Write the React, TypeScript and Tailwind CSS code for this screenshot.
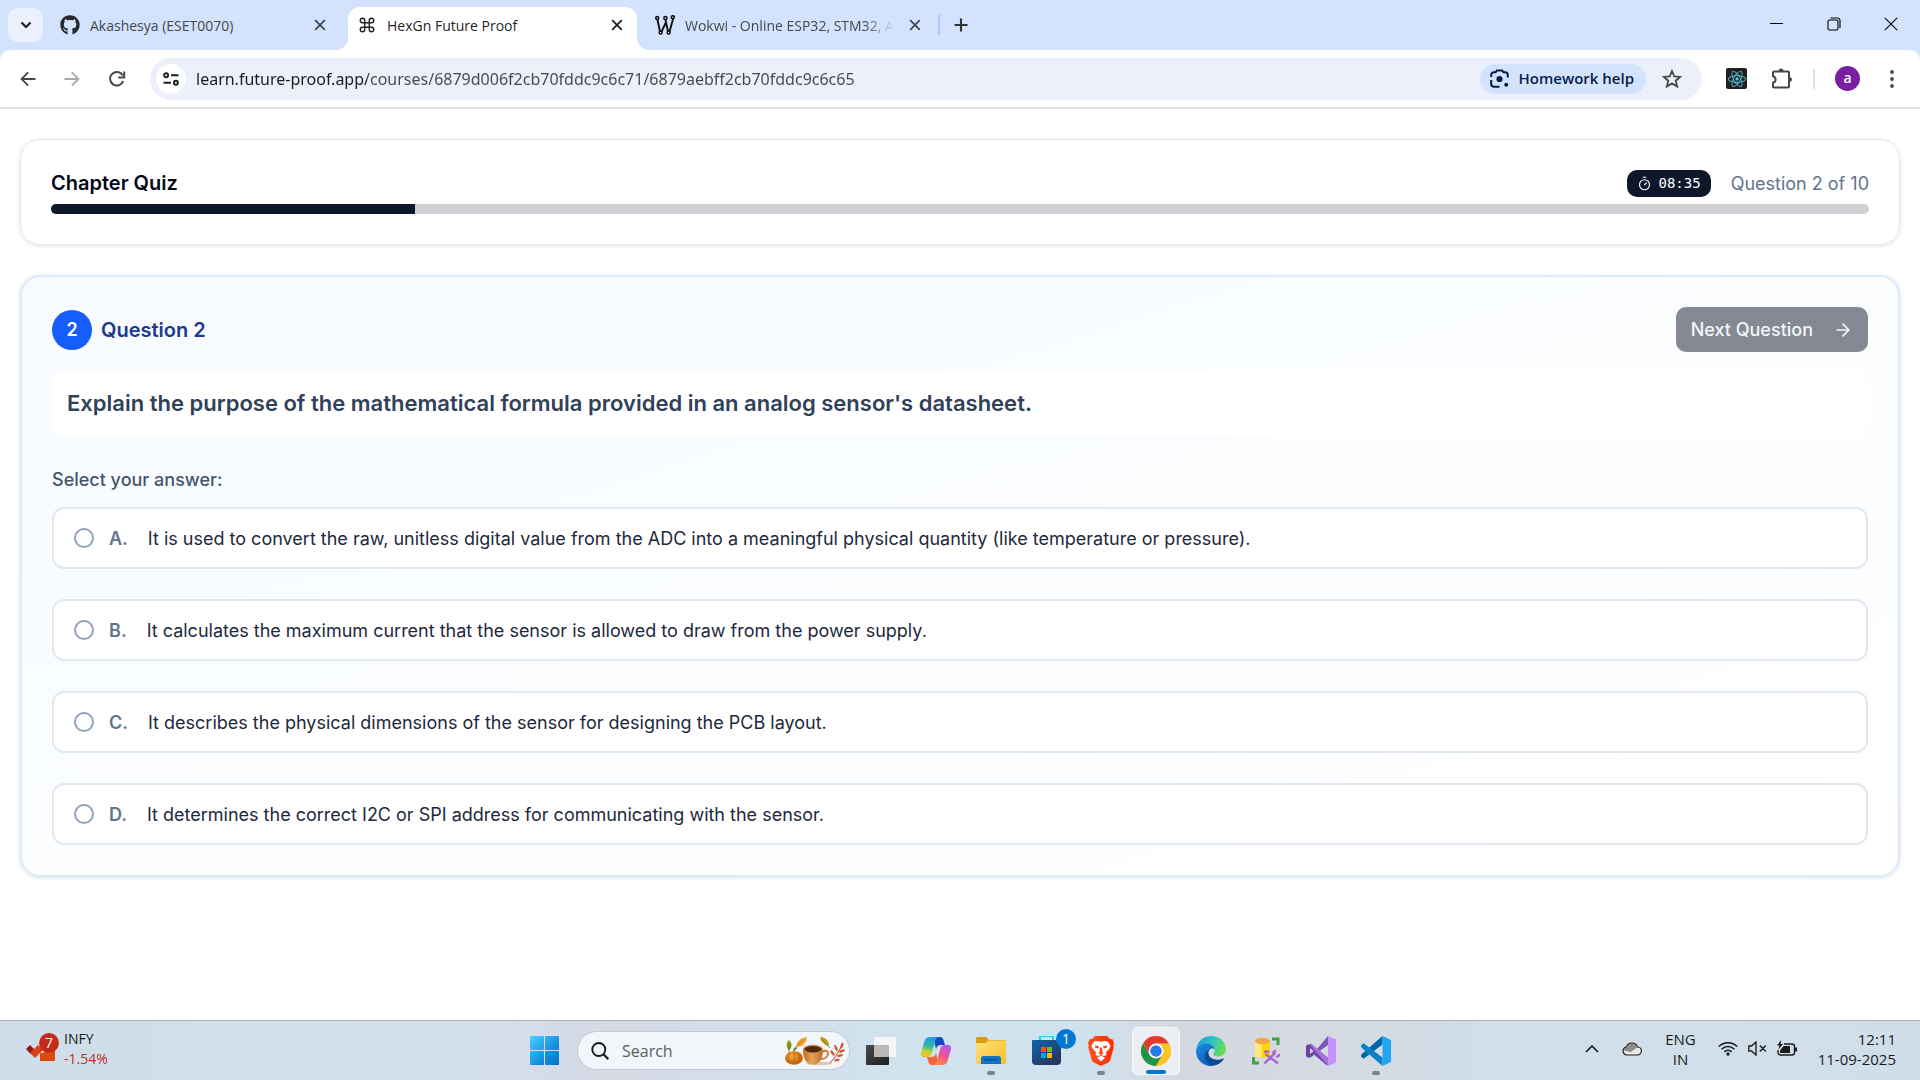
import type { ReactNode } from "react";
import { useState } from "react";
import { ArrowRight, Command, Timer } from "lucide-react";
import { FaGithub } from "react-icons/fa";
import { SiReact } from "react-icons/si";

const options = [
  { id: "A", text: "It is used to convert the raw, unitless digital value from the ADC into a meaningful physical quantity (like temperature or pressure)." },
  { id: "B", text: "It calculates the maximum current that the sensor is allowed to draw from the power supply." },
  { id: "C", text: "It describes the physical dimensions of the sensor for designing the PCB layout." },
  { id: "D", text: "It determines the correct I2C or SPI address for communicating with the sensor." },
];

function CloseIcon() {
  return (
    <svg viewBox="0 0 12 12" className="size-3" fill="none" stroke="currentColor" strokeWidth="1.8" aria-hidden="true">
      <path d="M1.2 1.2 10.8 10.8M10.8 1.2 1.2 10.8" />
    </svg>
  );
}

function WokwiIcon() {
  return (
    <svg viewBox="0 0 20 20" className="size-5 shrink-0" fill="none" stroke="#111" strokeWidth="1.9" strokeLinecap="round" strokeLinejoin="round" aria-hidden="true">
      <path d="M2.4 4.5 5 16.5M6.4 17 10.6 8M10.6 5.5 13 16.3M14.4 17 18 4.2" />
      <g fill="#d3e3fd" strokeWidth="1.5">
        <circle cx="2.2" cy="3" r="1.5" />
        <circle cx="10.4" cy="3" r="1.6" />
        <circle cx="17.8" cy="2.2" r="1.5" />
        <circle cx="5.6" cy="17.6" r="1.5" />
        <circle cx="13.6" cy="17.6" r="1.5" />
      </g>
    </svg>
  );
}

function TabStrip() {
  return (
    <header className="flex h-[50px] items-stretch bg-[#d3e3fd] pl-2 text-[14px] text-[#44474b]">
      <button aria-label="Search tabs" className="mt-2 flex h-[34px] w-[35px] items-center justify-center rounded-[10px] bg-[#ebf1fd] text-[#1f1f1f]">
        <svg viewBox="0 0 12 8" className="h-2 w-3" fill="none" stroke="currentColor" strokeWidth="2.2"><path d="m1.5 1.5 4.5 4.5 4.5-4.5" /></svg>
      </button>
      <nav className="flex items-stretch" aria-label="Tabs">
        <div className="flex w-[305px] items-center pb-2 pl-[17px] pr-[22px] pt-2">
          <FaGithub className="size-5 shrink-0 text-[#24292f]" />
          <span className="ml-2.5 flex-1 truncate">Akashesya (ESET0070)</span>
          <button aria-label="Close Akashesya"><CloseIcon /></button>
        </div>
        <div className="relative mt-[7px] flex w-[289px] items-center rounded-t-xl bg-white pb-[7px] pl-2.5 pr-3.5 text-[#1f1f1f]">
          <span className="absolute -left-3 bottom-0 size-3 bg-[radial-gradient(circle_at_0_0,transparent_12px,white_12px)]" />
          <span className="absolute -right-3 bottom-0 size-3 bg-[radial-gradient(circle_at_100%_0,transparent_12px,white_12px)]" />
          <Command className="size-[18px] shrink-0" strokeWidth={1.8} />
          <span className="ml-[11px] flex-1 truncate">HexGn Future Proof</span>
          <button aria-label="Close HexGn Future Proof"><CloseIcon /></button>
        </div>
        <div className="flex w-[301px] items-center pb-2 pl-[18px] pr-[17px] pt-2">
          <WokwiIcon />
          <span className="ml-2.5 whitespace-nowrap [mask-image:linear-gradient(to_right,black_86%,transparent)]">
            Wokwi - Online ESP32, STM32, A
          </span>
          <button aria-label="Close Wokwi" className="ml-auto"><CloseIcon /></button>
        </div>
      </nav>
      <span className="mt-[15px] h-5 w-0.5 bg-[#a8c7fa]" />
      <button aria-label="New tab" className="mb-2 ml-[14px] mt-2 text-[#333]">
        <svg viewBox="0 0 14 14" className="size-3.5" stroke="currentColor" strokeWidth="2.1"><path d="M7 .5v13M.5 7h13" /></svg>
      </button>
      <div className="mb-[3px] ml-auto flex items-center pr-px text-black">
        <button aria-label="Minimize" className="flex h-full w-[57px] items-center justify-center"><span className="h-px w-[13px] bg-black" /></button>
        <button aria-label="Restore" className="flex h-full w-[57px] items-center justify-center">
          <svg viewBox="0 0 14 14" className="size-3.5" fill="none" stroke="currentColor" strokeWidth="1.1"><rect x="1" y="3" width="10" height="10" rx="1.5" /><path d="M3.5 1h7a2.5 2.5 0 0 1 2.5 2.5V11" /></svg>
        </button>
        <button aria-label="Close window" className="flex h-full w-[57px] items-center justify-center">
          <svg viewBox="0 0 14 14" className="size-3.5" stroke="currentColor" strokeWidth="1.1"><path d="m.8.8 12.4 12.4M13.2.8.8 13.2" /></svg>
        </button>
      </div>
    </header>
  );
}

function Toolbar() {
  return (
    <div className="bg-[#d3e3fd]">
      <div className="flex h-[59px] items-center rounded-t-[10px] border-b-2 border-[#dfe1e3] bg-white pl-5 text-[#474747]">
        <button aria-label="Back">
          <svg viewBox="0 0 16 16" className="size-4" fill="none" stroke="currentColor" strokeWidth="1.8"><path d="M15.5 8H1.5M8.2 1.3 1.5 8l6.7 6.7" /></svg>
        </button>
        <button aria-label="Forward" className="ml-7 text-[#a9a9a9]">
          <svg viewBox="0 0 16 16" className="size-4" fill="none" stroke="currentColor" strokeWidth="1.8"><path d="M.5 8h14M7.8 1.3 14.5 8l-6.7 6.7" /></svg>
        </button>
        <button aria-label="Reload" className="ml-7">
          <svg viewBox="0 0 18 18" className="size-[18px]" fill="none" stroke="currentColor" strokeWidth="2"><path d="M15.2 11.2A6.8 6.8 0 1 1 14.8 5.4" /><path d="M16.2 1.5v6h-6" /></svg>
        </button>
        <div className="ml-6 flex h-[42px] flex-1 items-center rounded-full bg-[#ebf0fa] pl-1.5 pr-5">
          <button aria-label="View site information" className="flex size-[30px] items-center justify-center rounded-full bg-white text-[#1f1f1f]">
            <svg viewBox="0 0 16 14" className="h-3.5 w-4" fill="none" stroke="currentColor" strokeWidth="1.9"><circle cx="3.1" cy="3.2" r="2" /><path d="M8 3.2h7.5M.5 10.8H8" /><circle cx="12.9" cy="10.8" r="2" /></svg>
          </button>
          <input
            aria-label="Address"
            readOnly
            value="learn.future-proof.app/courses/6879d006f2cb70fddc9c6c71/6879aebff2cb70fddc9c6c65"
            className="ml-2.5 h-[30px] min-w-0 flex-1 bg-[linear-gradient(90deg,#1b1b1b_171px,#474747_171px)] bg-clip-text font-['Noto_Sans',sans-serif] text-[16px] text-transparent outline-none"
          />
          <button className="flex h-[30px] items-center gap-2.5 rounded-full bg-[#d3e3fd] pl-2.5 pr-3 text-[15px] font-semibold text-[#041e49]">
            <svg viewBox="0 0 19 19" className="size-[19px]" fill="none" stroke="currentColor" strokeWidth="2">
              <path d="M1.2 8V6a2.8 2.8 0 0 1 2.8-2.8h1.6L6.8 1.4h5.4l1.2 1.8H15A2.8 2.8 0 0 1 17.8 6v2.5M1.2 11v4A2.8 2.8 0 0 0 4 17.8h5.5" />
              <circle cx="9.5" cy="10" r="3.1" fill="currentColor" stroke="none" /><circle cx="16.2" cy="15.8" r="2" fill="currentColor" stroke="none" />
            </svg>
            Homework help
          </button>
          <button aria-label="Bookmark this tab" className="ml-4">
            <svg viewBox="0 0 20 19" className="h-[19px] w-5" fill="none" stroke="currentColor" strokeWidth="1.8"><path d="m10 2 2.3 5.4 5.9.5-4.5 3.8 1.4 5.8-5.1-3.1-5.1 3.1 1.4-5.8L1.8 7.9l5.9-.5z" /></svg>
          </button>
        </div>
        <button aria-label="React Developer Tools" className="ml-6 flex size-[21px] items-center justify-center rounded-xs bg-[#202020] text-[#58c4dc]"><SiReact className="size-[18px]" /></button>
        <button aria-label="Extensions" className="ml-6">
          <svg viewBox="0 0 22 21" className="h-[21px] w-[22px]" fill="none" stroke="currentColor" strokeWidth="2">
            <path d="M3 3.5h14a1 1 0 0 1 1 1v14a1 1 0 0 1-1 1H3a1 1 0 0 1-1-1v-3.7a3.4 3.4 0 0 0 0-6.6V4.5a1 1 0 0 1 1-1z" />
            <path d="M7.500 3a2.500 2.500 0 0 1 5 0zM18.500 9a2.500 2.500 0 0 1 0 5z" fill="currentColor" stroke="none" />
          </svg>
        </button>
        <span className="ml-5 h-5 w-0.5 bg-[#d3e3fd]" />
        <button aria-label="Profile" className="ml-5 flex size-[25px] items-center justify-center rounded-full bg-[#7b1fa2] pb-0.5 text-[14px] font-semibold text-white">a</button>
        <button aria-label="Menu" className="ml-[25px] mr-[21px] w-[14px]">
          <svg viewBox="0 0 14 18" className="h-[18px] w-3.5" fill="currentColor"><circle cx="7" cy="2" r="1.9" /><circle cx="7" cy="9" r="1.9" /><circle cx="7" cy="16" r="1.9" /></svg>
        </button>
      </div>
    </div>
  );
}

function Quiz() {
  const [picked, setPicked] = useState("");
  return (
    <main className="flex flex-1 flex-col gap-[30px] px-5 pt-[30px] font-[Inter,sans-serif]">
      <section className="rounded-[20px] border border-slate-200 px-[30px] pb-[30px] pt-[28px] shadow-[0_1px_4px_rgba(0,0,0,0.12)]">
        <div className="flex items-center justify-between">
          <h1 className="text-[20px] font-semibold leading-[30px] text-[#020618]">Chapter Quiz</h1>
          <div className="flex items-center gap-5">
            <span className="flex h-[27px] items-center gap-1.5 rounded-[10px] bg-[#0f172b] px-2.5 font-['DejaVu_Sans_Mono',monospace] text-[14px] text-white">
              <Timer className="size-[15px]" strokeWidth={1.8} />
              08:35
            </span>
            <span className="text-[18px] leading-[25px] text-slate-500">Question 2 of 10</span>
          </div>
        </div>
        <div role="progressbar" aria-valuenow={20} aria-label="Quiz progress" className="mt-1.5 h-2.5 overflow-hidden rounded-full bg-[#cfd0d4]">
          <div className="h-full w-1/5 bg-[#0f172b]" />
        </div>
      </section>

      <section className="rounded-[20px] border-2 border-blue-100 bg-linear-to-br from-[#f7fbff] to-white p-[30px] shadow-[0_1px_4px_rgba(0,0,0,0.12)]">
        <div className="flex items-center justify-between">
          <div className="flex items-center gap-[9px]">
            <span className="flex size-10 items-center justify-center rounded-full bg-[#155dfc] text-[18px] font-semibold text-white">2</span>
            <h2 className="text-[20px] font-semibold text-blue-900">Question 2</h2>
          </div>
          <button className="flex h-[45px] items-center gap-5 rounded-[10px] bg-[#868994] px-[15px] text-[18px] font-medium text-[#f4f6f9]">
            Next Question
            <ArrowRight className="size-5" strokeWidth={2} />
          </button>
        </div>
        <h3 className="mt-[18px] rounded-[12px] bg-white px-[15px] py-[17px] text-[22px] font-semibold leading-[33px] text-slate-700">
          Explain the purpose of the mathematical formula provided in an analog sensor's datasheet.
        </h3>
        <fieldset className="mt-[30px]">
          <legend className="text-[18px] font-medium leading-[25px] text-slate-600">Select your answer:</legend>
          <div className="mt-[15px] flex flex-col gap-[30px]">
            {options.map((o) => (
              <label key={o.id} className="flex min-h-[62px] items-center rounded-[12px] border-2 border-slate-200 bg-white px-5 text-[18px] leading-[25px]">
                <input
                  type="radio"
                  name="answer"
                  value={o.id}
                  checked={picked === o.id}
                  onChange={() => setPicked(o.id)}
                  className="size-5 appearance-none rounded-full border-2 border-[#90a1b9] checked:border-[6px] checked:border-[#155dfc]"
                />
                <span className="ml-[15px] font-semibold text-slate-500">{o.id}.</span>
                <span className="ml-5 text-slate-800">{o.text}</span>
              </label>
            ))}
          </div>
        </fieldset>
      </section>
    </main>
  );
}

function TaskButton({ label, children, active, running }: { label: string; children: ReactNode; active?: boolean; running?: boolean }) {
  return (
    <button
      aria-label={label}
      className={active ? "relative flex size-12 items-center justify-center rounded-md border border-white/60 bg-white/55" : "relative flex size-12 items-center justify-center rounded-md"}
    >
      {children}
      {active && <span className="absolute bottom-0 h-1 w-5 rounded-full bg-[#0078d4]" />}
      {running && <span className="absolute bottom-0 h-1 w-2 rounded-full bg-[#7c8083]" />}
    </button>
  );
}

function StartIcon() {
  return (
    <svg viewBox="0 0 29 29" className="size-[29px]">
      <defs><linearGradient id="start" x1="0" y1="0" x2="29" y2="29" gradientUnits="userSpaceOnUse"><stop stopColor="#4bd0ff" /><stop offset="0.6" stopColor="#1590e0" /><stop offset="1" stopColor="#0072cf" /></linearGradient></defs>
      <g fill="url(#start)"><rect width="14" height="14" rx="1" /><rect x="15" width="14" height="14" rx="1" /><rect y="15" width="14" height="14" rx="1" /><rect x="15" y="15" width="14" height="14" rx="1" /></g>
    </svg>
  );
}

function AutumnArt() {
  return (
    <svg viewBox="0 0 60 30" className="h-[30px] w-[60px]">
      <defs>
        <linearGradient id="cup" x1="0" x2="1"><stop stopColor="#b8651d" /><stop offset="0.45" stopColor="#e9a25a" /><stop offset="1" stopColor="#b76a26" /></linearGradient>
        <radialGradient id="pumpkin" cx="0.4" cy="0.35"><stop stopColor="#f7b13c" /><stop offset="1" stopColor="#c9660c" /></radialGradient>
      </defs>
      <ellipse cx="34" cy="27.5" rx="13" ry="1.8" fill="#dfc7ad" />
      <path d="M4 4c-4 4-2 8 0 11 3-4 4-7 0-11z" fill="#8d9a20" /><path d="M4 7v10" stroke="#6c7412" strokeWidth="0.7" />
      <path d="M11 11c1-6 4-9 11-10-1 6-4 10-11 10z" fill="#efa12c" /><path d="m10 12 9-9" stroke="#b86b14" strokeWidth="0.7" />
      <path d="M35 1c6 0 9 4 9 9-5-1-8-4-9-9z" fill="#b7a11c" /><path d="m37 3 8 9" stroke="#7d6d12" strokeWidth="0.7" />
      <path d="M45 27c4-4 9-11 12-18" stroke="#b8431a" strokeWidth="1" fill="none" strokeLinecap="round" />
      <g fill="#d9572a">
        <ellipse cx="57" cy="9.500" rx="1.300" ry="3" transform="rotate(20 57 9.500)" />
        <ellipse cx="51" cy="12" rx="1.300" ry="3.200" transform="rotate(-25 51 12)" />
        <ellipse cx="57" cy="15" rx="1.300" ry="3" transform="rotate(65 57 15)" />
        <ellipse cx="47.500" cy="17" rx="1.300" ry="3.200" transform="rotate(-35 47.500 17)" />
        <ellipse cx="55" cy="19.500" rx="1.300" ry="3" transform="rotate(75 55 19.500)" />
        <ellipse cx="52" cy="24" rx="1.200" ry="2.800" transform="rotate(80 52 24)" />
      </g>
      <path d="M9 15c0-2 1-3 3-3" stroke="#5f7a1d" strokeWidth="1.6" fill="none" />
      <ellipse cx="9" cy="22" rx="9" ry="6.8" fill="url(#pumpkin)" />
      <path d="M9 15.500v13M5.500 16c-3 4-3 8 0 12M12.500 16c3 4 3 8 0 12" stroke="#b75c0c" strokeWidth="0.7" fill="none" />
      <path d="M37 16c5-3 7 0 5.500 3.500S38 23 36 23" stroke="#c47a35" strokeWidth="1.8" fill="none" />
      <path d="M18 13c0 9 3 15.500 10 15.500S38 22 38 13z" fill="url(#cup)" />
      <ellipse cx="28" cy="13" rx="10" ry="4.3" fill="#d98e45" /><ellipse cx="28" cy="13.3" rx="8.5" ry="3.2" fill="#4e2a10" />
    </svg>
  );
}

function TaskViewIcon() {
  return (
    <svg viewBox="0 0 30 30" className="size-[30px]">
      <defs><linearGradient id="tv" x2="1" y2="1"><stop stopColor="#4b4b4b" /><stop offset="1" stopColor="#1d1d1d" /></linearGradient></defs>
      <rect y="9" width="23" height="20" rx="1" fill="url(#tv)" /><rect x="8" y="1" width="22" height="20" rx="1" fill="#f6f6f6" /><path d="M8 9h15v12H9a1 1 0 0 1-1-1z" fill="#b9b9b9" />
    </svg>
  );
}

function CopilotIcon() {
  return (
    <svg viewBox="0 0 30 28" className="h-7 w-[30px]">
      <defs>
        <linearGradient id="cpA" x1="0.5" y1="0" x2="0.3" y2="1"><stop stopColor="#1e9be8" /><stop offset="0.45" stopColor="#2fb5a0" /><stop offset="0.75" stopColor="#c5d52b" /><stop offset="1" stopColor="#f6b71c" /></linearGradient>
        <linearGradient id="cpB" x1="0.8" y1="0" x2="0.3" y2="1"><stop stopColor="#b057f0" /><stop offset="0.5" stopColor="#ee5396" /><stop offset="1" stopColor="#fb8a3c" /></linearGradient>
      </defs>
      <path d="M12 0h7c2 0 3 1 3.500 3l1.500 5h-4c-3 0-4 1-5 4z" fill="#1846c4" />
      <path d="M18 28h-7c-2 0-3-1-3.500-3L6 20h4c3 0 4-1 5-4z" fill="#f4633c" />
      <path d="M9 0h9c-2 0-3 1.500-3.800 4L10.800 16c-.8 2.800-2.300 4-4.800 4H3c-2.500 0-3.500-2-2.800-5L3.500 4C4.300 1.500 6 0 9 0z" fill="url(#cpA)" />
      <path d="M21 28h-9c2 0 3-1.500 3.800-4L19.200 12c.8-2.800 2.300-4 4.800-4h3c2.500 0 3.500 2 2.800 5l-3.300 11c-.8 2.500-2.500 4-5.500 4z" fill="url(#cpB)" />
    </svg>
  );
}

function FolderIcon() {
  return (
    <svg viewBox="0 0 30 27" className="h-[27px] w-[30px]">
      <defs><linearGradient id="fold" x2="1" y2="1"><stop stopColor="#ffdf7a" /><stop offset="1" stopColor="#f8bf2d" /></linearGradient></defs>
      <path d="M0 1.500A1.500 1.500 0 0 1 1.500 0H10l3 3H29a1 1 0 0 1 1 1v8H0z" fill="#dc9b0c" />
      <path d="M0 6h9.500l3-2.500H30V26a1 1 0 0 1-1 1H1a1 1 0 0 1-1-1z" fill="url(#fold)" />
      <path d="M5 27v-5.500A2.500 2.500 0 0 1 7.500 19h15a2.500 2.500 0 0 1 2.500 2.500V27z" fill="#1273c4" /><path d="M8.500 22.800h13" stroke="#0a4a86" strokeWidth="1.2" />
    </svg>
  );
}

function StoreIcon() {
  return (
    <svg viewBox="0 0 29 29" className="size-[29px]">
      <defs><linearGradient id="store" x2="0.7" y2="1"><stop stopColor="#0f64ae" /><stop offset="1" stopColor="#28365c" /></linearGradient></defs>
      <path d="M8 6V1.500A1.500 1.500 0 0 1 9.500 0h10A1.500 1.500 0 0 1 21 1.500V6" fill="none" stroke="#39c1f3" strokeWidth="2" />
      <path d="M0 5a1 1 0 0 1 1-1h27a1 1 0 0 1 1 1v20a4 4 0 0 1-4 4H4a4 4 0 0 1-4-4z" fill="url(#store)" />
      <path d="M9 11h5v5H9z" fill="#f25022" /><path d="M15 11h5v5h-5z" fill="#7fba00" /><path d="M9 17h5v5H9z" fill="#00a4ef" /><path d="M15 17h5v5h-5z" fill="#ffb900" />
    </svg>
  );
}

function BraveIcon() {
  return (
    <svg viewBox="0 0 26 30" className="h-[30px] w-[26px]">
      <defs><linearGradient id="brave" x2="1"><stop stopColor="#ff5026" /><stop offset="1" stopColor="#ff2a00" /></linearGradient></defs>
      <path d="M7 0h12l3 3 2.500.3L26 7l-.8 2.500.6 1.800-3.500 12.500c-.4 1.200-1 2-2 2.700L14 29.600a2 2 0 0 1-2 0l-6.300-3.100c-1-.7-1.600-1.500-2-2.700L.2 11.300l.6-1.800L0 7l1.500-3.700L4 3z" fill="url(#brave)" />
      <path d="m9.500 5 3.500.7 3.500-.7 3.300.5 2.700 4.200-.6 2.200-4 4.600.7 2.500-2.800 1-2.800-1.500-2.800 1.500-2.800-1 .7-2.500-4-4.600-.6-2.200 2.700-4.200z" fill="#fff" />
      <path d="m13 19.500 4 2.300-4 3.700-4-3.700z" fill="#fff" />
      <path d="m7 9.500 4 .8-.8 2.200-2.700-.5zM19 9.500l-4 .8.8 2.200 2.700-.5zM12 11.500h2l.5 4.500 1 1.500-2.500 1.200-2.500-1.200 1-1.500z" fill="#ff4018" />
    </svg>
  );
}

function ChromeIcon() {
  return (
    <svg viewBox="0 0 48 48" className="size-[30px]">
      <path d="M24 12h20.800A24 24 0 0 1 24 48l10.400-18z" fill="#fcc31e" />
      <path d="M34.400 30 24 48A24 24 0 0 1 3.200 12l10.400 18z" fill="#229342" />
      <path d="M3.200 12 13.600 30 24 12h20.800A24 24 0 0 0 3.200 12z" fill="#e33b2e" />
      <circle cx="24" cy="24" r="12" fill="#fff" /><circle cx="24" cy="24" r="9.300" fill="#2878eb" />
    </svg>
  );
}

function EdgeIcon() {
  return (
    <svg viewBox="0 0 30 30" className="size-[30px]">
      <defs>
        <linearGradient id="edA" x1="0" y1="0.2" x2="1" y2="0.5"><stop stopColor="#1a9be0" /><stop offset="0.5" stopColor="#2fc2c8" /><stop offset="1" stopColor="#67e04f" /></linearGradient>
        <linearGradient id="edB" x2="0.6" y2="1"><stop stopColor="#1a8fdf" /><stop offset="1" stopColor="#0b5cb8" /></linearGradient>
      </defs>
      <path d="M.5 12C1.800 5 7.500 0 15 0c9 0 15 6.300 15 13 0 4.500-3.500 7.500-8 7.500-3.500 0-4.800-1.300-4.800-2.300 0-.8 1.300-1.400 1.300-3.700C18.500 11 14 8.500 10 8.500c-5 0-8 2-9.500 3.500z" fill="url(#edA)" />
      <path d="M0 15c0-4 4.500-7.500 10-7.500 4.500 0 8 2.500 8.400 5.500C16 11.500 12 13.500 12 18c0 6 5 9.500 9.500 9.500C19.500 29 17.500 30 15 30 6.700 30 0 23.300 0 15z" fill="url(#edB)" />
      <path d="M13.500 13.600C9.500 15 8.700 18 9 20.500c.5 5 4.500 9.500 9 9 4-.5 7.500-3 9.700-6.300.4-.6-.1-1-.7-.7-6 2.800-13.500.5-14.500-4.500-.4-2 .1-3.400 1-4.400z" fill="#0c4a94" />
    </svg>
  );
}

function DatabaseToolIcon() {
  return (
    <svg viewBox="0 0 28 28" className="size-7">
      <path d="M20 2h6v6M7 26H1.500v-6" fill="none" stroke="#42a047" strokeWidth="3" />
      <path d="M3 4h15v15c-2 2-13 2-15 0z" fill="#ffd400" /><path d="M3 4h7v16.500c-3 0-6-.5-7-1.500z" fill="#ffe873" /><ellipse cx="10.500" cy="4" rx="7.500" ry="3.200" fill="#f0a74a" />
      <path d="m12.500 26.500 11-11m-11.500 0c2-1.500 4-1 5 0m-3.500 1.500L26 26.500m-4.500-9.500c-.5-2 1-3.500 2.500-3m3 3c.5 1.500-1 3-3 2.500" fill="none" stroke="#ad61d0" strokeWidth="2.300" />
    </svg>
  );
}

function VisualStudioIcon() {
  return (
    <svg viewBox="0 0 30 30" className="size-[30px]">
      <path d="M0 9.500 3.500 8l18 15.500V30L8 18.500 3.500 22 0 20.500z" fill="#6a45a0" /><path d="M4 12v6l3.500-3z" fill="#d6d9e1" />
      <path d="M3.500 22 22 0v9L8 19z" fill="#7d55b8" /><path d="M3.500 8 0 10l5-2.500 17 14V30z" fill="#a571e0" />
      <path d="M22 0 30 3.500v23L22 30z" fill="#c792fb" />
    </svg>
  );
}

function VsCodeIcon() {
  return (
    <svg viewBox="0 0 30 30" className="size-[30px]">
      <path d="M0 19.500c0-.5.2-.8.600-1.200L21.500 0v8.500L3.300 22.300c-.6.400-1 .4-1.500 0L.4 21c-.3-.3-.4-1-.4-1.500z" fill="#0065a9" />
      <path d="M0 10.500c0 .5.200.8.600 1.200L21.500 30v-8.500L3.300 7.700c-.6-.4-1-.4-1.500 0L.4 9c-.3.300-.4 1-.4 1.500z" fill="#0a80c8" />
      <path d="M21.500 0 29 3.500c.7.300 1 .8 1 1.500v20c0 .7-.3 1.200-1 1.500L21.500 30z" fill="#22a6f1" />
    </svg>
  );
}

function Taskbar() {
  return (
    <footer className="grid h-[60px] grid-cols-[1fr_auto_1fr] items-center border-t border-[#a5b1bb] bg-[linear-gradient(90deg,#cfdeea_0%,#cfe0ea_14%,#d2dfea_24%,#d6dae5_32%,#cfe3ef_47%,#d0e2ee_56%,#d5d8e0_62%,#d4dae3_70%,#d0dfe9_78%,#d1deea_100%)] text-[#1b1b1b]">
      <button className="flex items-center pb-1 pl-[26px] text-left text-[14px] leading-5">
        <span className="relative h-8 w-[38px]">
          <svg viewBox="0 0 30 20" className="absolute bottom-0.5 left-0 h-5 w-[30px]">
            <path d="m0 6 4-4 5 5-4.500 4z" fill="#8f1d12" /><path d="m4 10 8-8 5 5-8 8z" fill="#dc4310" /><path d="M14 10h3l3-3 9 1v9a1 1 0 0 1-1 1H14z" fill="#e04a08" />
          </svg>
          <span className="absolute left-[13px] top-0 flex size-5 items-center justify-center rounded-full bg-[#c42b1c] text-[14px] text-white">7</span>
        </span>
        <span>INFY<br /><span className="text-[#c42b1c]">-1.54%</span></span>
      </button>
      <div className="flex items-center gap-[7px]">
        <TaskButton label="Start"><StartIcon /></TaskButton>
        <label className="ml-0.5 flex h-[39px] w-[273px] items-center rounded-full border border-[#c3c9d3] bg-[#f2f5fa] pl-[13px] pr-1">
          <svg viewBox="0 0 18 18" className="size-[18px] shrink-0" fill="none" stroke="#1b1b1b" strokeWidth="1.9"><circle cx="7.8" cy="7.5" r="6.5" /><path d="m12.500 12.300 4.800 4.900" strokeWidth="2.3" /></svg>
          <input type="search" placeholder="Search" aria-label="Search" className="ml-[13px] min-w-0 flex-1 bg-transparent text-base outline-none placeholder:text-[#5b5d61]" />
          <AutumnArt />
        </label>
        <TaskButton label="Task view"><TaskViewIcon /></TaskButton>
        <TaskButton label="Copilot"><CopilotIcon /></TaskButton>
        <TaskButton label="File Explorer" running><FolderIcon /></TaskButton>
        <TaskButton label="Microsoft Store">
          <StoreIcon />
          <span className="absolute -right-1.5 top-0.5 flex size-5 items-center justify-center rounded-full bg-[#0078d4] text-[14px] text-white">1</span>
        </TaskButton>
        <TaskButton label="Brave" running><BraveIcon /></TaskButton>
        <TaskButton label="Google Chrome" active><ChromeIcon /></TaskButton>
        <TaskButton label="Microsoft Edge"><EdgeIcon /></TaskButton>
        <TaskButton label="SQL Server Management Studio"><DatabaseToolIcon /></TaskButton>
        <TaskButton label="Visual Studio"><VisualStudioIcon /></TaskButton>
        <TaskButton label="Visual Studio Code" running><VsCodeIcon /></TaskButton>
      </div>
      <div className="flex items-center justify-end pb-1 pr-6 text-[15px] leading-5">
        <button aria-label="Show hidden icons"><svg viewBox="0 0 14 8" className="h-2 w-3.5" fill="none" stroke="currentColor" strokeWidth="1.6"><path d="m1 7 6-6 6 6" /></svg></button>
        <button aria-label="OneDrive" className="ml-[23px]">
          <svg viewBox="0 0 20 14" className="h-3.5 w-5"><path d="M5 13a4 4 0 0 1-.7-7.900A6 6 0 0 1 15.500 5 4 4 0 0 1 15.300 13z" fill="#e9e9e9" stroke="#222" strokeWidth="1.2" /><path d="M1.800 8.500C2 6.500 3.500 5.500 5 5.500 6 2.500 8 1.500 10 1.500c3 0 4.500 2 5 4L9 10z" fill="#8d8d8d" /></svg>
        </button>
        <button className="ml-[23px] text-center">ENG<br />IN</button>
        <button aria-label="Network, volume and battery" className="ml-[22px] flex items-center gap-2.5">
          <svg viewBox="0 0 20 15" className="h-[15px] w-5" fill="none" stroke="currentColor" strokeWidth="1.5"><path d="M.8 5.500a13 13 0 0 1 18.400 0M3.600 8.200a9 9 0 0 1 12.800 0M6.300 10.900a5.200 5.200 0 0 1 7.400 0" /><circle cx="10" cy="13" r="1.7" fill="currentColor" stroke="none" /></svg>
          <svg viewBox="0 0 19 15" className="h-[15px] w-[19px]" fill="none" stroke="currentColor" strokeWidth="1.3"><path d="M.8 5h2.700L8 1v13L3.500 10H.8zM11.800 4.500l6 6M17.800 4.500l-6 6" /></svg>
          <svg viewBox="0 0 20 17" className="h-[17px] w-5" fill="none" stroke="currentColor" strokeWidth="1.4"><path d="M7 4h8a2.500 2.500 0 0 1 2.500 2.500v6A2.500 2.500 0 0 1 15 15H3.500A2.500 2.500 0 0 1 1 12.500V10" /><path d="M6.500 6H13v7H3v-2.500z" fill="currentColor" stroke="none" /><path d="M18 7.500h2v4h-2z" fill="currentColor" stroke="none" /><path d="M4 0 0 5.500h2.500L1.500 9.500 6 4H3.700z" fill="currentColor" stroke="none" /></svg>
        </button>
        <button className="ml-[21px] text-right">12:11<br />11-09-2025</button>
      </div>
    </footer>
  );
}

export default function App() {
  return (
    <div className="flex min-h-screen flex-col bg-white font-['Open_Sans',sans-serif]">
      <TabStrip />
      <Toolbar />
      <Quiz />
      <Taskbar />
    </div>
  );
}
